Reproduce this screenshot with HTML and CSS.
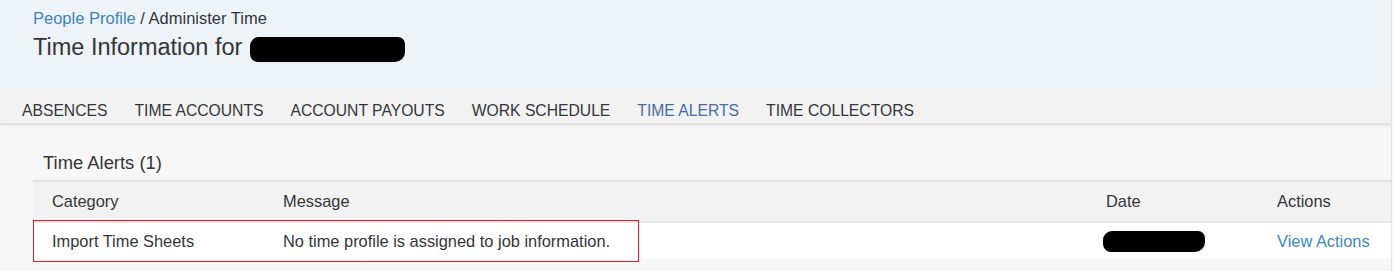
FILE: index.html
```html
<!DOCTYPE html>
<html lang="en">

<head>
	<meta charset="UTF-8">
	<meta name="viewport" content="width=device-width, initial-scale=1.0">
	<title>Time Information</title>
	<link rel="stylesheet" href="styles.css">
</head>

<body>
	<div class="page">
		<div class="main">
			<header class="profile-header">
				<div class="breadcrumb"><a href="#">People Profile</a> / Administer Time</div>
				<h1 class="title">Time Information for <span class="redacted redacted-name"></span></h1>
			</header>

			<nav class="tabs">
				<ul>
					<li><a href="#">Absences</a></li>
					<li><a href="#">Time Accounts</a></li>
					<li><a href="#">Account Payouts</a></li>
					<li><a href="#">Work Schedule</a></li>
					<li class="active"><a href="#">Time Alerts</a></li>
					<li><a href="#">Time Collectors</a></li>
				</ul>
			</nav>

			<section class="content">
				<h2 class="section-title">Time Alerts (1)</h2>
				<div class="table-wrap">
					<table class="alerts">
						<colgroup>
							<col class="col-category">
							<col class="col-message">
							<col class="col-date">
							<col>
						</colgroup>
						<thead>
							<tr>
								<th>Category</th>
								<th>Message</th>
								<th>Date</th>
								<th>Actions</th>
							</tr>
						</thead>
						<tbody>
							<tr>
								<td>Import Time Sheets</td>
								<td>No time profile is assigned to job information.</td>
								<td><span class="redacted redacted-date"></span></td>
								<td><a href="#">View Actions</a></td>
							</tr>
						</tbody>
					</table>
					<div class="highlight"></div>
				</div>
			</section>
		</div>
		<div class="edge"></div>
	</div>
</body>

</html>
```

FILE: styles.css
```css
body {
	font-family: 'Liberation Sans', Arial, sans-serif;
	margin: 0;
	padding: 0;
	background-color: #f7f7f7;
	color: #32363a;
}

.page {
	display: flex;
	height: 271px;
	overflow: hidden;
}

.main {
	flex: 1;
	min-width: 0;
}

.edge {
	width: 3px;
	background-color: #fafafa;
	border-left: 1px solid #e4e4e4;
}

a {
	text-decoration: none;
}

/* header */

.profile-header {
	background-color: #eef3f8;
	height: 87px;
	padding: 8px 0 0 33px;
	box-sizing: border-box;
}

.breadcrumb {
	font-size: 16.5px;
	line-height: 21px;
	color: #32363a;
}

.breadcrumb a {
	color: #3c84c6;
}

.title {
	font-size: 23.5px;
	font-weight: normal;
	line-height: 30px;
	margin: 3px 0 0;
	display: flex;
	align-items: center;
}

.redacted {
	display: inline-block;
	background-color: #000;
	border-radius: 9px 7px 10px 8px;
}

.redacted-name {
	width: 155px;
	height: 25px;
	margin-left: 8px;
	margin-top: 4px;
}

.redacted-date {
	width: 102px;
	height: 21px;
	margin-left: -3px;
	vertical-align: middle;
}

/* tabs */

.tabs {
	background-color: #f2f2f2;
	height: 36px;
	box-shadow: 0 1px 2px rgba(0, 0, 0, 0.12);
	border-bottom: 1px solid #e2e2e2;
}

.tabs ul {
	list-style-type: none;
	margin: 0;
	padding: 0 0 0 22px;
	display: flex;
	gap: 27px;
	height: 100%;
	align-items: center;
}

.tabs a {
	color: #32363a;
	text-transform: uppercase;
	font-size: 15.7px;
	line-height: 20px;
	display: block;
	padding-top: 12px;
}

.tabs .active a {
	color: #436ea3;
}

/* content */

.content {
	padding: 28px 0 0 33px;
}

.section-title {
	font-size: 18.4px;
	font-weight: normal;
	margin: 0 0 7px 10px;
	line-height: 21px;
}

.table-wrap {
	position: relative;
}

.alerts {
	width: 100%;
	table-layout: fixed;
	border-collapse: collapse;
	font-size: 16.4px;
}

.col-category {
	width: 231px;
}

.col-message {
	width: 823px;
}

.col-date {
	width: 171px;
}

.alerts th,
.alerts td {
	text-align: left;
	font-weight: normal;
	padding: 0 0 0 19px;
	white-space: nowrap;
}

.alerts thead tr {
	background-color: #f2f2f2;
	border-top: 2px solid #e0e0e0;
	border-bottom: 2px solid #e8e8e8;
	height: 41px;
}

.alerts tbody tr {
	background-color: #fff;
	height: 37px;
}

.alerts td a {
	color: #3a87c8;
}

.highlight {
	position: absolute;
	left: 0;
	top: 40px;
	width: 606px;
	height: 42px;
	border: 1px solid #d9202a;
	box-sizing: border-box;
}
```
